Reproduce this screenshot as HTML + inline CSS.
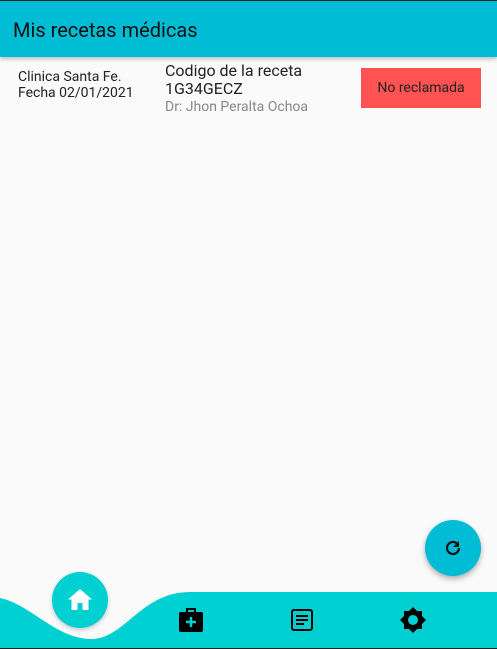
<!DOCTYPE html>
<html><head><meta charset="utf-8"><style>
html,body{margin:0;padding:0}
body{width:497px;height:649px;position:relative;overflow:hidden;background:#fafafa;font-family:"Roboto","Liberation Sans",sans-serif}
.top{position:absolute;left:0;top:0;width:497px;height:1px;background:#222}
.bar{position:absolute;left:0;top:1px;width:497px;height:56px;background:#00bcd4;box-shadow:0 2px 4px rgba(0,0,0,.25)}
.bar span{position:absolute;left:13px;top:17px;font-size:20px;color:#111}
.t{position:absolute;white-space:nowrap}
.badge{position:absolute;left:361px;top:68px;width:120px;height:40px;background:#ff5252;color:#222;font-size:14px;text-align:center;line-height:40px}
.fab{position:absolute;left:425px;top:520px;width:56px;height:56px;border-radius:50%;background:#00bcd4;box-shadow:0 3px 6px rgba(0,0,0,.3)}
.home{position:absolute;left:52px;top:572px;width:56px;height:56px;border-radius:50%;background:#00d0d2;box-shadow:0 2px 5px rgba(0,0,0,.2)}
</style></head><body>
<div class="top"></div>
<div class="bar"><span>Mis recetas médicas</span></div>
<div class="t" style="left:18px;top:69px;font-size:14px;color:#222;line-height:16px">Clinica Santa Fe.<br>Fecha 02/01/2021</div>
<div class="t" style="left:165px;top:62px;font-size:16px;color:#222;line-height:18px">Codigo de la receta<br>1G34GECZ</div>
<div class="t" style="left:165px;top:99px;font-size:14px;color:#888">Dr: Jhon Peralta Ochoa</div>
<div class="badge">No reclamada</div>
<div class="fab"><svg width="56" height="56" viewBox="0 0 56 56"><path d="M34 28a6 6 0 1 1-2-4.5" fill="none" stroke="#111" stroke-width="2.2"/><path d="M34 21v6h-6z" fill="#111"/></svg></div>
<svg style="position:absolute;left:0;top:590px" width="497" height="59" viewBox="0 0 497 59">
<path d="M0 8 C30 14 55 48 90 49 C125 50 140 2 190 2 L497 2 L497 58 L0 58Z" fill="#00d0d2"/>
<rect x="0" y="58" width="497" height="1" fill="#222"/>
</svg>
<div class="home"><svg width="56" height="56" viewBox="0 0 56 56"><path d="M28 17 L16 27.5 H19.5 V38 H25.5 V31 H30.5 V38 H36.5 V27.5 H40Z" fill="#fff"/></svg></div>
<svg style="position:absolute;left:178px;top:606px" width="26" height="28" viewBox="0 0 26 28"><path d="M9 6V3h8v3" fill="none" stroke="#000" stroke-width="2"/><rect x="1" y="6" width="24" height="20" rx="2" fill="#000"/><path d="M13 11v10M8 16h10" stroke="#00d0d2" stroke-width="2.5"/></svg>
<svg style="position:absolute;left:290px;top:608px" width="24" height="24" viewBox="0 0 24 24"><rect x="2" y="2" width="20" height="20" rx="2" fill="none" stroke="#000" stroke-width="2"/><path d="M6 8h12M6 12h12M6 16h8" stroke="#000" stroke-width="2"/></svg>
<svg style="position:absolute;left:399px;top:606px" width="28" height="28" viewBox="0 0 28 28"><path d="M14 1 L18 5 H23 V10 L27 14 L23 18 V23 H18 L14 27 L10 23 H5 V18 L1 14 L5 10 V5 H10Z" fill="#000"/><circle cx="14" cy="14" r="5" fill="#00d0d2"/></svg>
</body></html>
